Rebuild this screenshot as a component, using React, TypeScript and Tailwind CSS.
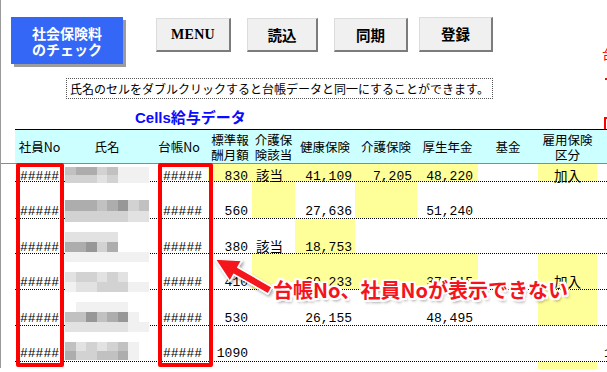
import React from "react";

const JP = "font-['Noto_Sans_CJK_JP',sans-serif]";
const MONO = "font-['Liberation_Mono','Noto_Sans_CJK_JP',monospace]";
const COLS = "grid grid-cols-[49px_86px_58px_44px_43px_60px_62px_61px_60px_59px_1fr]";
const YEL = "bg-[#ffff99]";

const SHADE: Record<string, string> = {
  w: "bg-transparent",
  a: "bg-[#f1f1f1]",
  b: "bg-[#e2e2e2]",
  c: "bg-[#d2d2d2]",
  d: "bg-[#c1c1c1]",
  e: "bg-[#adadad]",
  f: "bg-[#979797]",
};

type Row = {
  h: string;
  pb: string;
  mpt: string;
  th: string;
  mosaic: string[];
  std: string;
  stdY?: boolean;
  gai?: string;
  gaiY?: boolean;
  ken?: string;
  kenY?: boolean;
  kai?: string;
  kaiY?: boolean;
  kou?: string;
  kouY?: boolean;
  koyo?: string;
  koyoY?: boolean;
  extra?: string;
};

const ROWS: Row[] = [
  {
    h: "h-[18px]", pb: "pb-0", mpt: "pt-[3px]", th: "h-[8px]",
    mosaic: ["deecdaaa", "cccbcaaa"],
    std: "830", stdY: true, gai: "該当", gaiY: true,
    ken: "41,109", kenY: true, kai: "7,205", kaiY: true, kou: "48,220", kouY: true,
    koyo: "加入", koyoY: true,
  },
  {
    h: "h-[37px]", pb: "pb-[2px]", mpt: "pt-[18px]", th: "h-[11px]",
    mosaic: ["eeedefcd", "ccccccbb"],
    std: "560", gaiY: true, ken: "27,636", kaiY: true, kou: "51,240",
  },
  {
    h: "h-[35px]", pb: "pb-[1px]", mpt: "pt-[13px]", th: "h-[10px]",
    mosaic: ["bbbbbwww", "eefcewww", "aaaaaaaa"],
    std: "380", gai: "該当", ken: "18,753", kenY: true,
  },
  {
    h: "h-[36px]", pb: "pb-[2px]", mpt: "pt-[18px]", th: "h-[10px]",
    mosaic: ["bccbcbww", "abbcccaa"],
    std: "410", gaiY: true, ken: "20,233", kenY: true, kaiY: true, kou: "37,515", kouY: true,
    koyo: "加入", koyoY: true,
  },
  {
    h: "h-[36px]", pb: "pb-[2px]", mpt: "pt-[12px]", th: "h-[10px]",
    mosaic: ["waaaaaww", "ddfdefaw", "bbbbbbaa"],
    std: "530", ken: "26,155", kou: "48,495", koyoY: true,
  },
  {
    h: "h-[36px]", pb: "pb-[3px]", mpt: "pt-[16px]", th: "h-[9px]",
    mosaic: ["dbcbcdaw", "eccddeaw"],
    std: "1090", extra: "1",
  },
];

function Num({ v, y, pr, pb }: { v?: string; y?: boolean; pr: string; pb: string }) {
  return (
    <div className={`flex items-end justify-end ${pr} ${pb} ${y ? YEL : ""}`}>
      {v ? <span className={`${MONO} text-[13px] leading-[9px] text-black`}>{v}</span> : null}
    </div>
  );
}

function Jp({ v, y, center, pb }: { v?: string; y?: boolean; center?: boolean; pb: string }) {
  return (
    <div className={`flex items-end ${center ? "justify-center" : "pl-[4px]"} ${pb} ${y ? YEL : ""}`}>
      {v ? <span className={`${JP} text-[13.5px] leading-[12px] text-black`}>{v}</span> : null}
    </div>
  );
}

function Mosaic({ rows, th }: { rows: string[]; th: string }) {
  return (
    <div className="flex w-[84px] flex-col">
      {rows.map((r, i) => (
        <div key={i} className="grid grid-cols-8">
          {r.split("").map((c, j) => (
            <div key={j} className={`${th} ${SHADE[c]}`} />
          ))}
        </div>
      ))}
    </div>
  );
}

function Btn({ children, cls }: { children: React.ReactNode; cls: string }) {
  return (
    <div
      className={`flex items-center justify-center bg-[#f0f0f0] border-t border-l border-t-[#dcdcdc] border-l-[#dcdcdc] border-r-2 border-b-2 border-r-[#7c7c7c] border-b-[#7c7c7c] ${cls}`}
    >
      {children}
    </div>
  );
}

function Head({ children }: { children: React.ReactNode }) {
  return (
    <div className={`flex items-center justify-center text-center ${JP} text-[12.5px] leading-[15px] text-black`}>
      {children}
    </div>
  );
}

export default function App() {
  return (
    <div className="relative flex h-[372px] w-[607px] overflow-hidden bg-white">
      <div className="h-[368px] w-px shrink-0 bg-[#9a9a9a]" />
      <div className="flex w-[606px] flex-col">
        {/* top buttons */}
        <div className="flex items-start pl-[10px] pt-[17px]">
          <div className="flex h-[47px] w-[112px] flex-col items-center justify-center bg-[#3467f5] shadow-[3px_3px_0_#9c9c9c]">
            <span className={`${JP} text-[14px] font-bold leading-[16px] text-white`}>社会保険料</span>
            <span className={`${JP} text-[14px] font-bold leading-[16px] text-white`}>のチェック</span>
          </div>
          <Btn cls="ml-[33px] mt-[1px] h-[34px] w-[75px]">
            <span className="font-['Liberation_Serif',serif] text-[14px] font-bold tracking-[0.3px] text-black">MENU</span>
          </Btn>
          <Btn cls="ml-[16px] mt-[1px] h-[34px] w-[71px]">
            <span className={`${JP} text-[14.5px] font-bold text-black`}>読込</span>
          </Btn>
          <Btn cls="ml-[16px] mt-[1px] h-[34px] w-[74px]">
            <span className={`${JP} text-[14.5px] font-bold text-black`}>同期</span>
          </Btn>
          <Btn cls="ml-[11px] h-[35px] w-[74px]">
            <span className={`${JP} text-[14.5px] font-bold text-black`}>登録</span>
          </Btn>
        </div>

        {/* note */}
        <div className="ml-[65px] mt-[14px] flex h-[21px] w-[427px] items-center border border-dotted border-[#555] pl-[3px]">
          <span className={`${JP} text-[12px] leading-[14px] text-black`}>
            氏名のセルをダブルクリックすると台帳データと同一にすることができます。
          </span>
        </div>

        {/* title */}
        <div className="mt-[6px] h-[18px] pl-[134px]">
          <span className="font-['Liberation_Sans','Noto_Sans_CJK_JP',sans-serif] text-[15px] font-bold leading-[18px] text-[#0a0aff]">
            Cells給与データ
          </span>
        </div>

        {/* table header */}
        <div className={`${COLS} ml-[14px] mt-[6px] h-[34px] border-t border-black bg-[#ccffff]`}>
          <Head>社員No</Head>
          <Head>氏名</Head>
          <Head>台帳No</Head>
          <Head>
            標準報
            <br />
            酬月額
          </Head>
          <Head>
            介護保
            <br />
            険該当
          </Head>
          <Head>健康保険</Head>
          <Head>介護保険</Head>
          <Head>厚生年金</Head>
          <Head>基金</Head>
          <Head>
            雇用保険
            <br />
            区分
          </Head>
          <div />
        </div>
        <div className="h-px w-full bg-[#8a8a8a]" />

        {/* body */}
        {ROWS.map((r, i) => (
          <div
            key={i}
            className={`${COLS} grid-rows-[minmax(0,1fr)] ml-[14px] ${r.h} border-b border-dotted border-black`}
          >
            <div className={`flex items-end pl-[5px] ${r.pb}`}>
              <span className={`${MONO} text-[13px] leading-[9px] text-black`}>#####</span>
            </div>
            <div className={`pl-[1px] ${r.mpt}`}>
              <Mosaic rows={r.mosaic} th={r.th} />
            </div>
            <div className={`flex items-end pl-[13px] ${r.pb}`}>
              <span className={`${MONO} text-[13px] leading-[9px] text-black`}>#####</span>
            </div>
            <Num v={r.std} y={r.stdY} pr="pr-[4px]" pb={r.pb} />
            <Jp v={r.gai} y={r.gaiY} pb={r.pb} />
            <Num v={r.ken} y={r.kenY} pr="pr-[3px]" pb={r.pb} />
            <Num v={r.kai} y={r.kaiY} pr="pr-[5px]" pb={r.pb} />
            <Num v={r.kou} y={r.kouY} pr="pr-[5px]" pb={r.pb} />
            <div />
            <Jp v={r.koyo} y={r.koyoY} center pb={r.pb} />
            <div className={`flex items-end pl-[7px] ${r.pb}`}>
              {r.extra ? <span className={`${MONO} text-[13px] leading-[9px] text-black`}>{r.extra}</span> : null}
            </div>
          </div>
        ))}
        <div className={`${COLS} ml-[14px] h-[7px]`}>
          <div />
          <div />
          <div />
          <div />
          <div />
          <div />
          <div />
          <div />
          <div />
          <div className={YEL} />
          <div />
        </div>
      </div>

      {/* red fragments at right edge */}
      <span className={`absolute left-[602px] top-[46px] ${JP} text-[13px] leading-[16px] text-[#ff0000]`}>台</span>
      <div className="absolute left-[605px] top-[78px] h-[2px] w-[3px] bg-[#ff0000]" />
      <div className="absolute left-[604px] top-[117px] h-[12px] w-[8px] border-l-2 border-t-2 border-[#ff0000]" />

      {/* red highlight rectangles */}
      <div className="absolute left-[16px] top-[163px] h-[204px] w-[48px] rounded-[2px] border-4 border-[#ff0000]" />
      <div className="absolute left-[158px] top-[163px] h-[204px] w-[55px] rounded-[2px] border-4 border-[#ff0000]" />

      {/* arrow */}
      <svg className="pointer-events-none absolute left-0 top-0" width="607" height="372" viewBox="0 0 607 372">
        <defs>
          <filter id="sh" x="-20%" y="-20%" width="140%" height="140%">
            <feDropShadow dx="1.5" dy="2" stdDeviation="1.5" floodColor="#000" floodOpacity="0.35" />
          </filter>
        </defs>
        <polygon
          points="215,259 241.8,260.5 237.8,267.4 272,287 268,294 233.8,274.4 229.9,281.3"
          fill="#f5141c"
          stroke="#ffffff"
          strokeWidth="1.5"
          strokeLinejoin="round"
          filter="url(#sh)"
        />
      </svg>

      {/* annotation */}
      <div
        className={`absolute left-[273px] top-[280px] whitespace-nowrap ${JP} text-[20px] font-bold leading-[20px] text-[#f5141c] [text-shadow:-2px_-2px_0_#fff,2px_-2px_0_#fff,-2px_2px_0_#fff,2px_2px_0_#fff,0_2px_0_#fff,0_-2px_0_#fff,2px_0_0_#fff,-2px_0_0_#fff,2px_3px_3px_rgba(0,0,0,0.4)]`}
      >
        台帳No、社員Noが表示できない
      </div>
    </div>
  );
}
